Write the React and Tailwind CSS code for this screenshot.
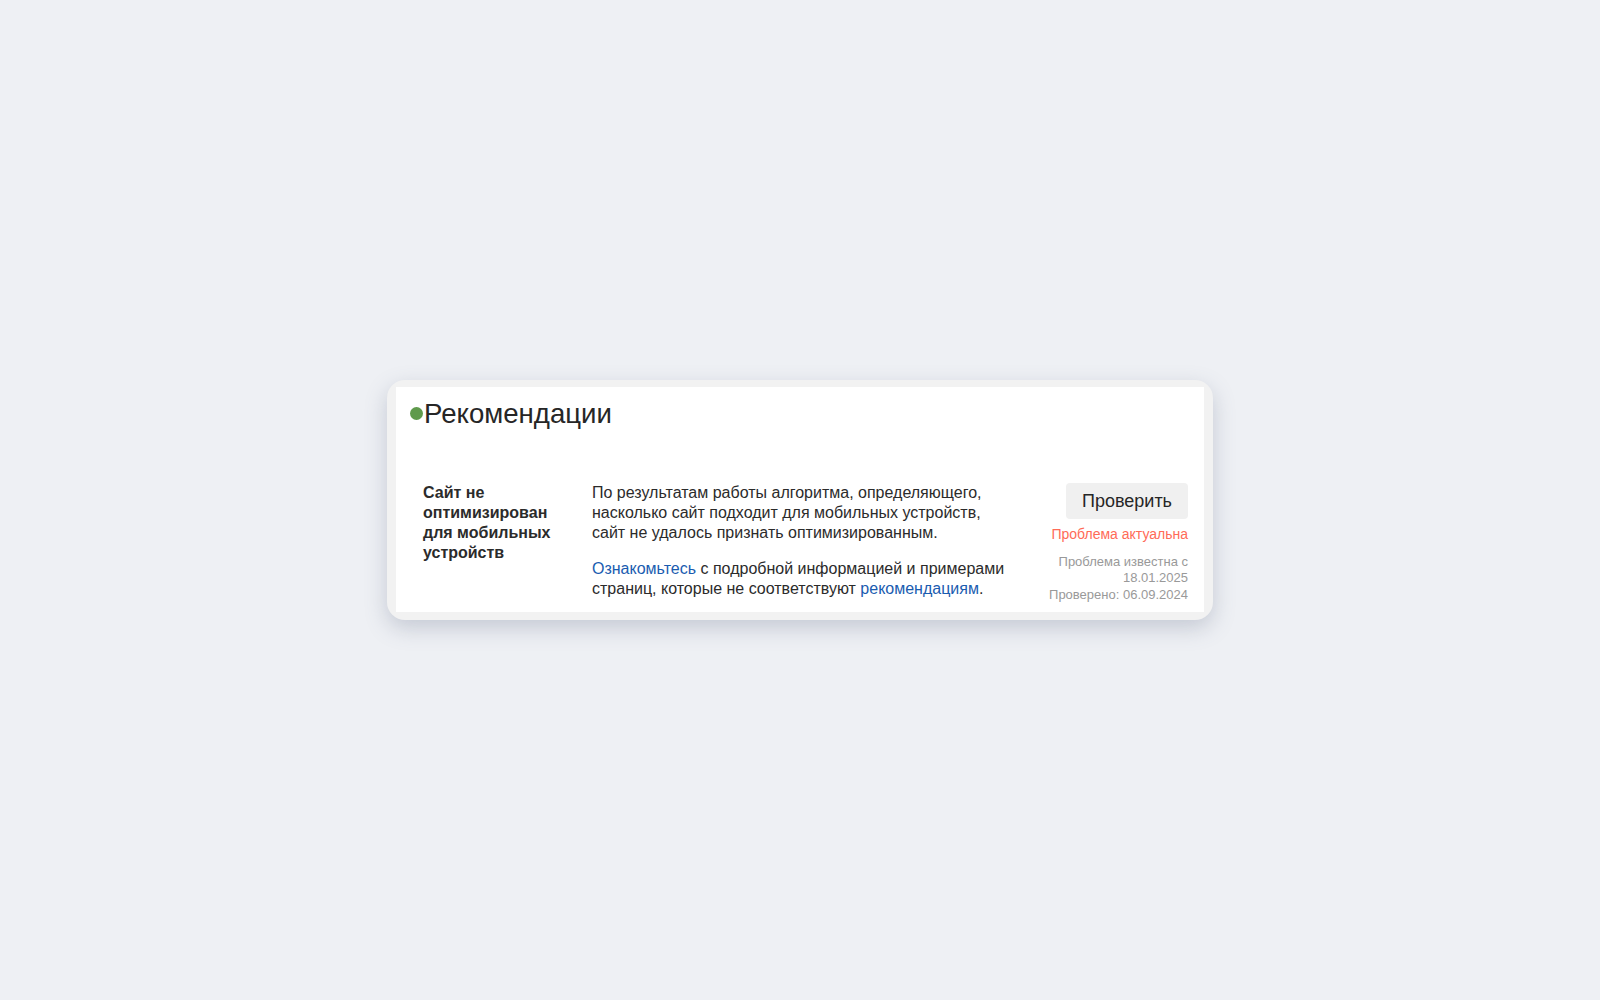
import React from "react";

export default function App() {
  return (
    <div
      className="min-h-screen w-full bg-[#eef0f4] flex items-center justify-center"
      style={{ fontFamily: '"Liberation Sans", Arial, sans-serif' }}
    >
      <div className="w-[826px] bg-[#f2f2f2] rounded-[18px] px-[9px] pt-[7px] pb-[8px] shadow-[0_8px_22px_rgba(90,100,130,0.28)]">
        <div className="bg-white pt-[11px] pb-[9px] pr-[16px]">
          <div className="flex items-center pl-[14px]">
            <span className="w-[13px] h-[13px] rounded-full bg-[#5f9a4c] mr-[1px] mt-[-2px]" />
            <h2 className="text-[27.6px] leading-[32px] text-[#262626] font-normal">Рекомендации</h2>
          </div>
          <div className="flex mt-[53px] pl-[27px]">
            <div className="w-[169px] shrink-0 pr-[20px] text-[16px] leading-[20px] font-bold text-[#2b2b2b]">
              Сайт не оптимизирован для мобильных устройств
            </div>
            <div className="w-[424px] shrink-0 text-[16px] leading-[20px] text-[#2b2b2b]">
              <p>
                По результатам работы алгоритма, определяющего, насколько сайт подходит для мобильных
                устройств, сайт не удалось признать оптимизированным.
              </p>
              <p className="mt-[16px]">
                <a className="text-[#1a5cb0]">Ознакомьтесь</a> с подробной информацией и примерами
                страниц, которые не соответствуют <a className="text-[#1a5cb0]">рекомендациям</a>.
              </p>
            </div>
            <div className="flex-1 flex flex-col items-end text-right">
              <button className="w-[122px] h-[36px] bg-[#f0f0f0] rounded-[4px] text-[18px] text-[#262626]">
                Проверить
              </button>
              <div className="mt-[6px] text-[14px] leading-[18px] text-[#ff6b57]">Проблема актуальна</div>
              <div className="mt-[11px] text-[13px] leading-[16px] text-[#999]">
                Проблема известна с 18.01.2025
              </div>
              <div className="mt-[1px] text-[13px] leading-[16px] text-[#999]">Проверено: 06.09.2024</div>
            </div>
          </div>
        </div>
      </div>
    </div>
  );
}
